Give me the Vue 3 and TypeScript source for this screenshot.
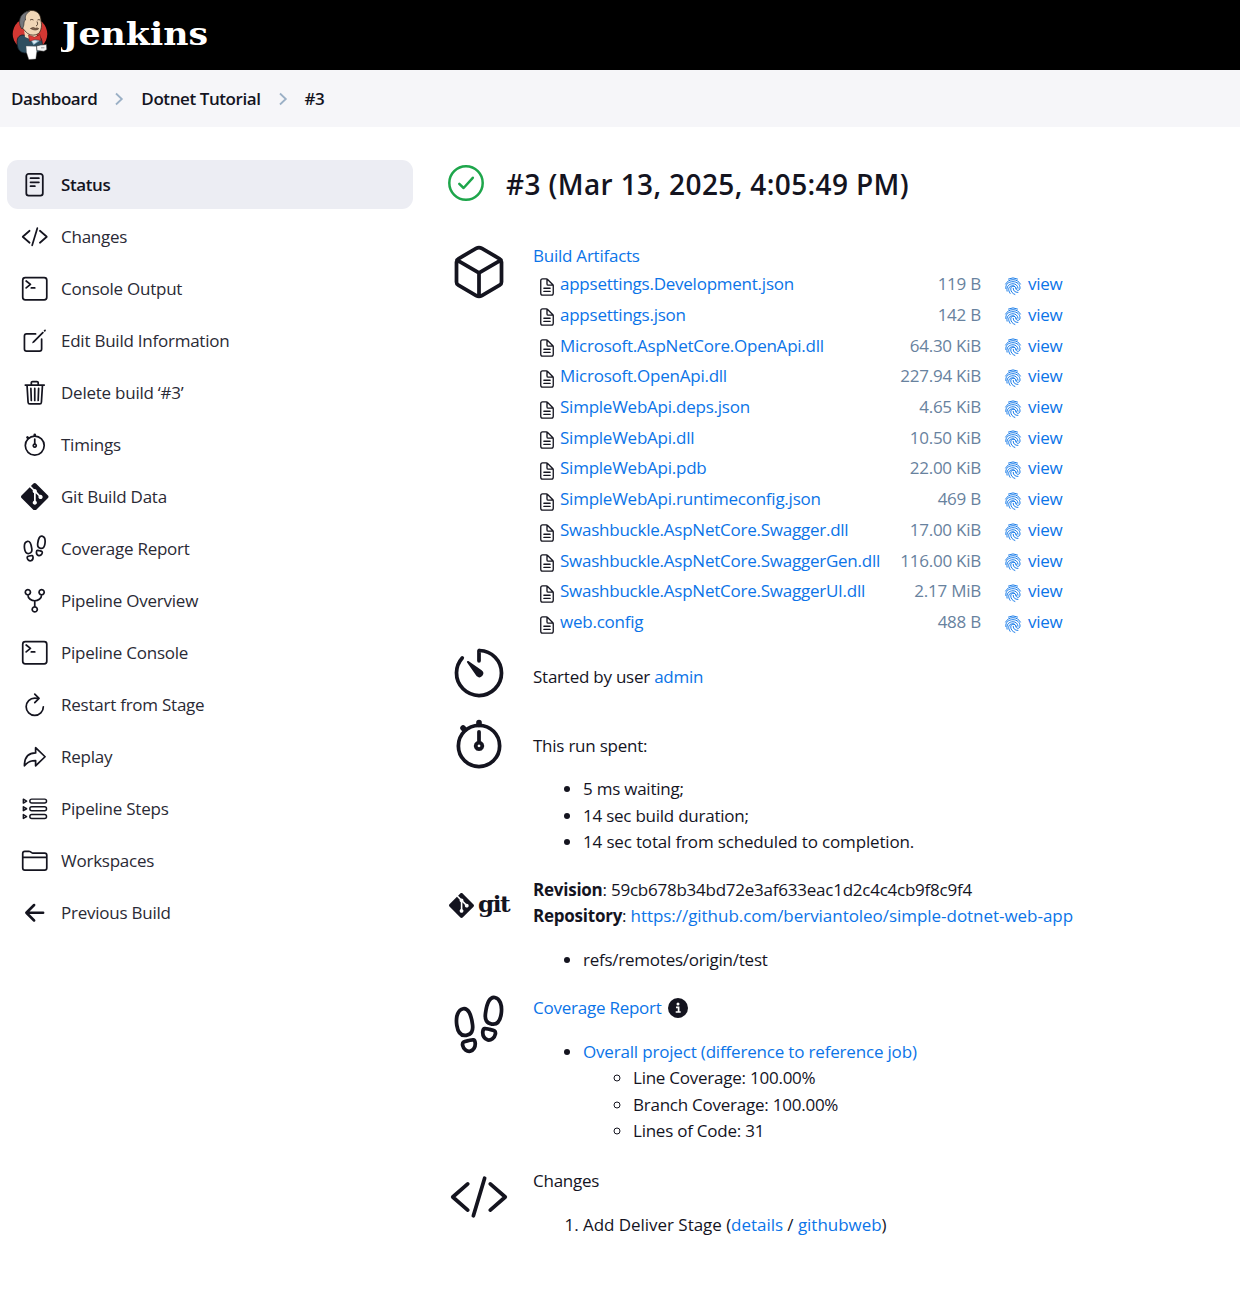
<script setup lang="ts">
import { h, type FunctionalComponent } from 'vue'

interface Shape { d: string; fill?: boolean; w?: number }
interface Glyph { box: number; w: number; shapes: Shape[] }

const glyphs: Record<string, Glyph> = {
  status: { box: 28, w: 1.8, shapes: [{ d: 'M7.8 2.9h12a2.4 2.4 0 0 1 2.4 2.4v17.4a2.4 2.4 0 0 1-2.4 2.4h-12a2.4 2.4 0 0 1-2.4-2.4V5.3a2.4 2.4 0 0 1 2.4-2.4zM9.7 7.3h8.5M9.7 11.5h8.5M9.7 15.5h4.4' }] },
  code: { box: 512, w: 32, shapes: [{ d: 'M160 368L32 256l128-112M352 368l128-112-128-112M304 96l-96 320' }] },
  terminal: { box: 512, w: 32, shapes: [{ d: 'M80 48h352a48 48 0 0 1 48 48v320a48 48 0 0 1-48 48H80a48 48 0 0 1-48-48V96a48 48 0 0 1 48-48zM96 112l80 64-80 64M192 240h64' }] },
  edit: { box: 512, w: 32, shapes: [
    { d: 'M384 224v184a40 40 0 01-40 40H104a40 40 0 01-40-40V168a40 40 0 0140-40h167.48' },
    { d: 'M459.94 53.25a16.06 16.06 0 00-23.22-.56L424.35 65a8 8 0 000 11.31l11.34 11.32a8 8 0 0011.34 0l12.06-12c6.1-6.09 6.67-16.01.85-22.38zM399.34 90L218.82 270.2a9 9 0 00-2.31 3.93L208.16 299a3.91 3.91 0 004.86 4.86l24.85-8.35a9 9 0 003.93-2.31L422 112.66a9 9 0 000-12.66l-9.95-10a9 9 0 00-12.71 0z', fill: true },
  ] },
  trash: { box: 512, w: 32, shapes: [{ d: 'M112 112l20 320c.95 18.49 14.4 32 32 32h184c17.67 0 30.87-13.51 32-32l20-320M80 112h352M192 112V72a23.93 23.93 0 0124-24h80a23.93 23.93 0 0124 24v40M256 176v224M184 176l8 224M328 176l-8 224' }] },
  stopwatch: { box: 512, w: 32, shapes: [
    { d: 'M256 232v-80M256 96a176 176 0 10176 176A176 176 0 00256 96z' },
    { d: 'M256 88V72M132 132l-12-12', w: 48 },
    { d: 'M256 244a28 28 0 1 0 .1 0z' },
  ] },
  git: { box: 24, w: 0, shapes: [{ fill: true, d: 'M23.546 10.93L13.067.452c-.604-.603-1.582-.603-2.188 0L8.708 2.627l2.76 2.76c.645-.215 1.379-.07 1.889.441.516.515.658 1.258.438 1.9l2.658 2.66c.645-.223 1.387-.078 1.9.435.721.72.721 1.884 0 2.604-.719.719-1.881.719-2.6 0-.539-.541-.674-1.337-.404-1.996L12.86 8.955v6.525c.176.086.342.203.488.348.713.721.713 1.883 0 2.6-.719.721-1.889.721-2.609 0-.719-.719-.719-1.879 0-2.598.182-.18.387-.316.605-.406V8.835c-.217-.091-.424-.222-.6-.401-.545-.545-.676-1.342-.396-2.009L7.636 3.7.45 10.881c-.6.605-.6 1.584 0 2.189l10.48 10.477c.604.604 1.582.604 2.186 0l10.43-10.43c.605-.603.605-1.582 0-2.187' }] },
  footsteps: { box: 512, w: 32, shapes: [{ d: 'M200 246.84c8.81 58.62-7.33 90.67-52.91 97.41-50.65 7.49-71.52-26.44-80.33-84.84-11.85-78.78 11.54-134.39 54.42-142.27 41.44-7.61 67.19 45.59 78.82 129.7zM223.65 409.53c3.13 33.28-14.86 64.34-42 69.66-27.4 5.36-58.71-16.37-65.09-49.19s17.75-34.56 47.32-40.21 55.99-20.4 59.77 19.74zM312 150.83c-8.81 58.62 7.33 90.67 52.9 97.41 50.66 7.49 71.52-26.44 80.33-84.84 11.86-78.78-11.54-134.39-54.4-142.27-42.13-7.74-67.2 45.59-78.83 129.7zM288.35 313.53c-3.13 33.27 14.86 64.34 42 69.66 27.4 5.36 58.71-16.37 65.09-49.19s-17.75-34.56-47.32-40.22-55.99-20.4-59.77 19.75z' }] },
  fork: { box: 512, w: 32, shapes: [{ d: 'M128 48a48 48 0 1 0 .1 0zM384 48a48 48 0 1 0 .1 0zM256 368a48 48 0 1 0 .1 0zM128 144c0 74.67 68.92 112 128 112M384 144c0 74.67-68.92 112-128 112v112' }] },
  refresh: { box: 512, w: 32, shapes: [{ d: 'M320 146s24.36-12-64-12a160 160 0 10160 160M256 58l80 80-80 80' }] },
  replay: { box: 512, w: 32, shapes: [{ d: 'M448 256L272 88v96C103.57 184 64 304.77 64 424c48.61-62.24 91.6-96 208-96v96z' }] },
  steps: { box: 28, w: 1.5, shapes: [6.2, 14, 21.9].map((y) => ({ d: `M11 ${y - 2}h13a2 2 0 0 1 2 2 2 2 0 0 1-2 2h-13a2 2 0 0 1-2-2 2 2 0 0 1 2-2zM2.4 ${y - 2}l3.300 2-3.300 2z` })) },
  folder: { box: 512, w: 32, shapes: [{ d: 'M440 432H72a40 40 0 01-40-40V120a40 40 0 0140-40h75.89a40 40 0 0122.19 6.72l27.84 18.56a40 40 0 0022.19 6.72H440a40 40 0 0140 40v240a40 40 0 01-40 40zM32 192h448' }] },
  back: { box: 512, w: 48, shapes: [{ d: 'M244 400L100 256l144-144M120 256h292' }] },
  cube: { box: 512, w: 32, shapes: [{ d: 'M448 341.37V170.61A32 32 0 00432.11 143l-152-88.46a47.94 47.94 0 00-48.24 0L79.89 143A32 32 0 0064 170.61v170.76A32 32 0 0079.89 369l152 88.46a48 48 0 0048.24 0l152-88.46A32 32 0 00448 341.37zM69 153.99l187 110 187-110M256 463.99v-200' }] },
  timer: { box: 512, w: 32, shapes: [
    { d: 'M112.91 128A191.85 191.85 0 0064 254c-1.18 106.35 85.65 193.8 192 194 106.2.2 192-85.83 192-192 0-104.54-83.55-189.61-187.5-192a4.36 4.36 0 00-4.5 4.37V152' },
    { d: 'M233.38 278.63l-79-113a8.13 8.13 0 0111.32-11.32l113 79a32.5 32.5 0 01-37.25 53.26 33.21 33.21 0 01-8.07-7.94z', fill: true },
  ] },
  document: { box: 512, w: 34, shapes: [{ d: 'M416 221.25V416a48 48 0 01-48 48H144a48 48 0 01-48-48V96a48 48 0 0148-48h98.75a32 32 0 0122.62 9.37l141.26 141.26a32 32 0 019.37 22.62zM256 56v120a32 32 0 0032 32h120M176 288h160M176 368h160' }] },
  fingerprint: { box: 20, w: 1.05, shapes: [{ d: 'M5 2.200Q10-.4 15 2.200M1.800 7.800Q4.500 3 10 3T18.200 7.800M2 12.800C1.500 8 5 5.200 10 5.200c4.500 0 7.800 3 7.800 7 0 3.200-4 3.500-4.600.6-.6-3.600-5.800-3.500-5.700.4.100 3 1.800 5.200 4.600 6.200M3.400 15.700C2.300 10.500 5.600 7.500 10 7.500c3 0 5.400 2 5.600 5M6.800 18.200C3.800 14 5 9.900 9.600 9.800c2.200 0 3.600 1.200 4 3.200M10.200 12.600c.2 3 2 4.600 5.300 4.500' }] },
}

const menu = [
  { icon: 'status', label: 'Status' },
  { icon: 'code', label: 'Changes' },
  { icon: 'terminal', label: 'Console Output' },
  { icon: 'edit', label: 'Edit Build Information' },
  { icon: 'trash', label: 'Delete build ‘#3’' },
  { icon: 'stopwatch', label: 'Timings' },
  { icon: 'git', label: 'Git Build Data' },
  { icon: 'footsteps', label: 'Coverage Report' },
  { icon: 'fork', label: 'Pipeline Overview' },
  { icon: 'terminal', label: 'Pipeline Console' },
  { icon: 'refresh', label: 'Restart from Stage' },
  { icon: 'replay', label: 'Replay' },
  { icon: 'steps', label: 'Pipeline Steps' },
  { icon: 'folder', label: 'Workspaces' },
  { icon: 'back', label: 'Previous Build' },
]

const artifacts = [
  ['appsettings.Development.json', '119 B'],
  ['appsettings.json', '142 B'],
  ['Microsoft.AspNetCore.OpenApi.dll', '64.30 KiB'],
  ['Microsoft.OpenApi.dll', '227.94 KiB'],
  ['SimpleWebApi.deps.json', '4.65 KiB'],
  ['SimpleWebApi.dll', '10.50 KiB'],
  ['SimpleWebApi.pdb', '22.00 KiB'],
  ['SimpleWebApi.runtimeconfig.json', '469 B'],
  ['Swashbuckle.AspNetCore.Swagger.dll', '17.00 KiB'],
  ['Swashbuckle.AspNetCore.SwaggerGen.dll', '116.00 KiB'],
  ['Swashbuckle.AspNetCore.SwaggerUI.dll', '2.17 MiB'],
  ['web.config', '488 B'],
]

// Renders one entry of the glyph table as an inline SVG.
const Icon: FunctionalComponent<{ name: string }> = ({ name }) => {
  const g = glyphs[name]
  return h(
    'svg',
    { viewBox: `0 0 ${g.box} ${g.box}`, 'aria-hidden': 'true' },
    g.shapes.map((s) =>
      h('path', {
        d: s.d,
        fill: s.fill ? 'currentColor' : 'none',
        stroke: s.fill ? 'none' : 'currentColor',
        'stroke-width': s.w ?? g.w,
        'stroke-linecap': 'round',
        'stroke-linejoin': 'round',
      }),
    ),
  )
}
Icon.props = ['name']
</script>

<template>
  <div class="page">
    <header class="header">
      <svg class="butler" viewBox="0 0 38 52" aria-hidden="true">
        <ellipse cx="19" cy="25" rx="17.3" ry="16.5" fill="#d33833" />
        <path d="M11 26C6 27 5.500 32 6.500 37c.5 4 3 6.500 7 7l14-1 4-5c0-5-1-9-3-11z" fill="#2f4f60" stroke="#101c24" stroke-width=".8" />
        <path d="M13 20l1 8 7 3 5-4-1-6z" fill="#f0d6b7" />
        <path d="M10.500 18C8 9 13 2 20 1.500c7-.4 10 5 10 10.500 1 4 .6 9.500-2.500 12.500-4 2.500-9 2-12-1z" fill="#f0d6b7" stroke="#3a2c20" stroke-width=".8" />
        <path d="M11 20C7.500 16 7.500 8 12.500 4.500c2-1.500 4.500-2.500 6-2-4 2-4.500 5.500-4 8.500-2.500 1-.5 6-3.500 9z" fill="#75777c" stroke="#2b2b2b" stroke-width=".7" />
        <path d="M19 11q2-1.200 3.500 0M26.500 11q1.500-.8 2.500 0M26 12.500q1.600 3.500-1 4.500" fill="none" stroke="#4a3728" stroke-width=".9" />
        <path d="M19.500 19.500q3-1.800 4.700-.2 2.400-.8 3.500.4-3 2.600-8.200-.2z" fill="#8a6a55" stroke="#4a3728" stroke-width=".7" />
        <path d="M18.500 29l4 7 6-4-1-4z" fill="#81b0c4" />
        <path d="M20.500 31l2.500 4 3.500-3z" fill="#dfe9f0" />
        <path d="M17.500 26l6 2.200 5.500-2.700 1 6-5.800-1-5.700 1.800z" fill="#dc3a36" stroke="#7a1714" stroke-width=".5" />
        <path d="M15 37l10.500.3.3 5.200-1 7.500-7 .5-2.300-7z" fill="#fff" stroke="#555" stroke-width=".4" />
        <path d="M25.500 37l4-1 6-.5.3 5-2.800 1.800-7-.7z" fill="#f4f4f4" stroke="#333" stroke-width=".6" />
        <path d="M30 38.800h3.400" stroke="#888" stroke-width=".8" />
      </svg>
      <svg class="wordmark" viewBox="0 0 150 40" role="img" aria-label="Jenkins">
        <text x="1" y="27.500" textLength="146" lengthAdjust="spacingAndGlyphs">Jenkins</text>
      </svg>
    </header>

    <nav class="crumbs">
      <a>Dashboard</a>
      <svg viewBox="0 0 10 16"><path d="M2 2.500L7.800 8 2 13.500" /></svg>
      <a>Dotnet Tutorial</a>
      <svg viewBox="0 0 10 16"><path d="M2 2.500L7.800 8 2 13.500" /></svg>
      <a>#3</a>
    </nav>

    <div class="body">
      <aside class="side">
        <a v-for="(m, i) in menu" :key="m.label" class="task" :class="{ active: i === 0 }">
          <Icon :name="m.icon" class="task-icon" />
          <span>{{ m.label }}</span>
        </a>
      </aside>

      <main class="main">
        <div class="title">
          <svg viewBox="0 0 36 36"><circle cx="18" cy="18" r="16.700" /><path d="M11.300 18.800l4.300 4.200 9.200-10.200" /></svg>
          <h1>#3 (Mar 13, 2025, 4:05:49 PM)</h1>
        </div>

        <section class="row artifacts">
          <Icon name="cube" class="big" />
          <div>
            <a>Build Artifacts</a>
            <div class="files">
              <div v-for="[name, size] in artifacts" :key="name" class="file">
                <Icon name="document" class="doc" />
                <a class="name">{{ name }}</a>
                <span class="size">{{ size }}</span>
                <a class="finger"><Icon name="fingerprint" /></a>
                <a>view</a>
              </div>
            </div>
          </div>
        </section>

        <section class="row cause">
          <Icon name="timer" class="big" />
          <div>Started by user <a>admin</a></div>
        </section>

        <section class="row spent">
          <Icon name="stopwatch" class="big" />
          <div>
            This run spent:
            <ul>
              <li>5 ms waiting;</li>
              <li>14 sec build duration;</li>
              <li class="total">14 sec total from scheduled to completion.</li>
            </ul>
          </div>
        </section>

        <section class="row revision">
          <div class="gitlogo"><Icon name="git" /><span>git</span></div>
          <div>
            <div><b>Revision</b>: 59cb678b34bd72e3af633eac1d2c4c4cb9f8c9f4</div>
            <div><b>Repository</b>: <a class="url">https://github.com/berviantoleo/simple-dotnet-web-app</a></div>
            <ul><li>refs/remotes/origin/test</li></ul>
          </div>
        </section>

        <section class="row coverage">
          <Icon name="footsteps" class="big" />
          <div>
            <div class="with-info">
              <a>Coverage Report</a>
              <svg class="info" viewBox="0 0 20 20"><circle cx="10" cy="10" r="10" fill="#14141f" /><circle cx="10" cy="6" r="1.500" fill="#fff" /><path d="M8 9.300h2.600v4.400M7.700 14h5" fill="none" stroke="#fff" stroke-width="1.700" /></svg>
            </div>
            <ul>
              <li>
                <a class="project">Overall project (difference to reference job)</a>
                <ul>
                  <li>Line Coverage: 100.00%</li>
                  <li>Branch Coverage: 100.00%</li>
                  <li>Lines of Code: 31</li>
                </ul>
              </li>
            </ul>
          </div>
        </section>

        <section class="row changes">
          <Icon name="code" class="big" />
          <div>
            Changes
            <ol><li>Add Deliver Stage (<a>details</a> / <a>githubweb</a>)</li></ol>
          </div>
        </section>
      </main>
    </div>
  </div>
</template>

<style>
body {
  margin: 0;
  background: #fff;
}
</style>

<style scoped>
.page {
  min-height: 1308px;
  font-family: "Segoe UI", "Open Sans", "Noto Sans", sans-serif;
  font-size: 17px;
  line-height: 26.4px;
  letter-spacing: -0.24px;
  color: #14141f;
}
a {
  color: #0b74e8;
}
svg {
  display: block;
  flex: none;
}
.header {
  display: flex;
  height: 70px;
  background: #000;
}
.butler {
  width: 38px;
  height: 52px;
  margin: 9px 0 0 11px;
}
.wordmark {
  width: 150px;
  height: 40px;
  margin: 17px 0 0 12px;
}
.wordmark text {
  font: bold 31px "DejaVu Serif", serif;
  letter-spacing: 0;
  fill: #fff;
}
.crumbs {
  display: flex;
  align-items: center;
  box-sizing: border-box;
  height: 57px;
  padding: 1px 0 0 11px;
  background: #f6f6f9;
  font-weight: 600;
  letter-spacing: -0.42px;
}
.crumbs a {
  color: inherit;
}
.crumbs svg {
  width: 10px;
  height: 16px;
  margin: 0 17px;
}
.crumbs path {
  fill: none;
  stroke: #9bb0c6;
  stroke-width: 1.8;
}
.body {
  display: flex;
}
.side {
  display: flex;
  flex-direction: column;
  gap: 3px;
  width: 406px;
  padding: 33px 0 0 7px;
}
.task {
  display: flex;
  align-items: center;
  gap: 12px;
  height: 49px;
  padding-left: 14px;
  border-radius: 11px;
  color: #2a2a35;
}
.task span {
  padding-top: 2px;
}
.task.active {
  background: #ecedf3;
  color: #14141f;
  font-weight: 600;
  letter-spacing: -0.4px;
}
.task-icon {
  width: 27.5px;
  height: 27.5px;
  margin-right: 0.5px;
  color: #14141f;
}
.main {
  padding: 33px 0 0 36px;
}
.title {
  display: flex;
  align-items: center;
  gap: 22px;
  height: 48px;
}
.title svg {
  width: 36px;
  height: 36px;
  margin: -3px 0 0 -1px;
  fill: none;
  stroke: #1ea64b;
  stroke-width: 2.5;
  stroke-linecap: round;
  stroke-linejoin: round;
}
.title h1 {
  margin: 0;
  font-size: 28px;
  font-weight: 600;
  letter-spacing: 0.38px;
}
.row {
  display: grid;
  grid-template-columns: 60px auto;
  column-gap: 24px;
  align-items: start;
  justify-content: start;
}
.big {
  width: 60px;
  height: 60px;
}
.artifacts {
  height: 401px;
  margin-top: 34px;
}
.artifacts > div {
  padding-top: 0.5px;
}
.files {
  width: 531px;
  color: #68829e;
}
.file {
  display: grid;
  grid-template-columns: 27px 320px 101px 23px 24px auto;
  align-items: center;
  height: 30.73px;
}
.doc {
  width: 20px;
  height: 20px;
  margin: 5px 0 0 4px;
  color: #14141f;
}
.size {
  text-align: right;
}
.finger {
  grid-column: 5;
}
.finger svg {
  width: 18px;
  height: 20px;
  margin-top: 3px;
}
.cause {
  height: 71px;
}
.cause > div {
  padding-top: 20.5px;
}
.spent {
  height: 161px;
}
.spent > div {
  padding-top: 18.5px;
}
.total {
  letter-spacing: -0.16px;
}
ul,
ol {
  margin: 17.4px 0 0;
  padding-left: 50px;
}
ul ul {
  margin: 0;
}
.revision {
  height: 120px;
}
.revision > div + div {
  padding-top: 1.5px;
}
.url {
  letter-spacing: -0.04px;
}
.gitlogo {
  display: flex;
  align-items: center;
  gap: 4px;
  height: 60px;
}
.gitlogo svg {
  width: 25px;
  height: 25px;
}
.gitlogo span {
  margin-top: -4px;
  font: bold 23px "DejaVu Serif", serif;
  letter-spacing: -1.4px;
}
.coverage {
  height: 172px;
}
.with-info {
  display: flex;
  align-items: center;
  gap: 6px;
}
.project {
  letter-spacing: -0.18px;
}
.changes > div {
  padding-top: 0.8px;
}
.changes li {
  letter-spacing: -0.04px;
}
.info {
  width: 20px;
  height: 20px;
}
</style>
